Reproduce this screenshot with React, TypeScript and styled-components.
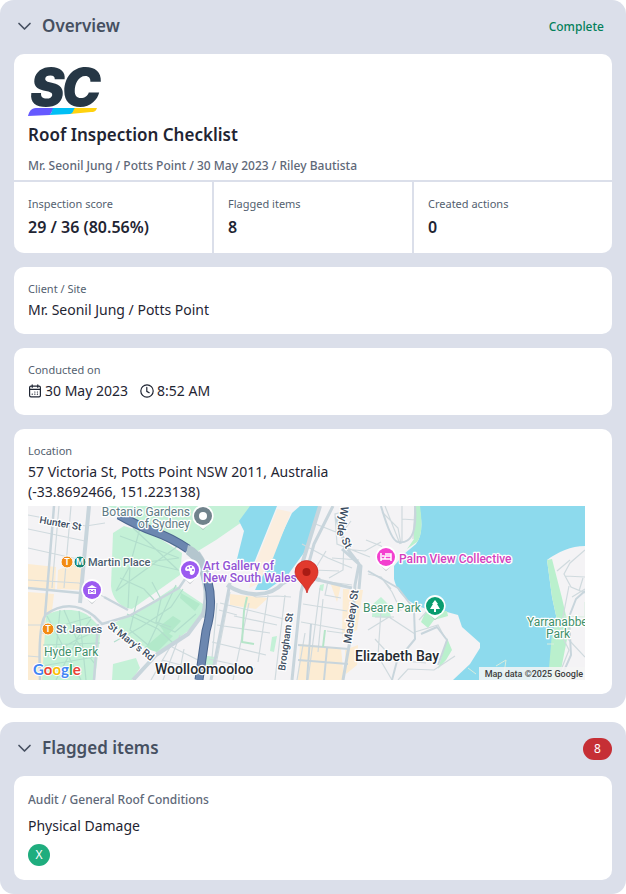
import React from "react";
import styled, { createGlobalStyle } from "styled-components";

const GlobalStyle = createGlobalStyle`
  *, *::before, *::after { box-sizing: border-box; }
  body {
    margin: 0;
    background: #ffffff;
    color: #1f2533;
    font-family: "Noto Sans", sans-serif;
    font-size: 14px;
    line-height: 20px;
  }
`;

const Page = styled.main`
  display: flex;
  flex-direction: column;
  gap: 14px;
`;

const Panel = styled.section`
  padding: 0 14px 14px;
  border-radius: 14px;
  background: #dbdfea;
`;

const PanelHeader = styled.header`
  display: flex;
  align-items: center;
  justify-content: space-between;
  height: 54px;
`;

const PanelTitle = styled.h2`
  margin: 0;
  font-size: 17px;
  font-weight: 600;
  line-height: 24px;
`;

const Toggle = styled.button`
  display: flex;
  align-items: center;
  gap: 10px;
  padding: 0 0 2px 3px;
  border: 0;
  background: none;
  color: #465061;
  font: inherit;
  cursor: pointer;
`;

const Status = styled.span`
  padding-right: 8px;
  color: #04805a;
  font-size: 12px;
  font-weight: 500;
`;

const CountBadge = styled.span`
  min-width: 29px;
  border-radius: 11px;
  background: #c62f35;
  color: #ffffff;
  font-size: 12px;
  line-height: 22px;
  text-align: center;
`;

const CardStack = styled.div`
  display: flex;
  flex-direction: column;
  gap: 14px;
`;

const Card = styled.article`
  overflow: hidden;
  border-radius: 10px;
  background: #ffffff;
`;

const CardBody = styled.div`
  padding: 14px;
`;

const Summary = styled.div`
  padding: 13px 14px 4px;
`;

const ReportTitle = styled.h1`
  margin: 6px 0 9px;
  font-size: 17px;
  font-weight: 600;
  line-height: 24px;
`;

const Breadcrumb = styled.p`
  margin: 0;
  color: #5e6878;
  font-size: 12px;
  font-weight: 500;
`;

const Stats = styled.dl`
  display: grid;
  grid-template-columns: repeat(3, 1fr);
  gap: 2px;
  margin: 0;
  padding-top: 2px;
  background: #dbdfea;
`;

const Stat = styled.div`
  padding: 14px;
  background: #ffffff;
`;

const StatLabel = styled.dt`
  color: #545f70;
  font-size: 11px;
  line-height: 16px;
`;

const StatValue = styled.dd`
  margin: 3px 0 0;
  font-size: 16px;
  font-weight: 600;
  line-height: 24px;
`;

const FieldLabel = styled.h3`
  margin: 0;
  color: #545f70;
  font-size: 11px;
  font-weight: 400;
  line-height: 16px;
`;

const FieldValue = styled.p`
  margin: 3px 0 0;
`;

const DateRow = styled.div`
  display: flex;
  gap: 12px;
  margin-top: 3px;
`;

const DatePart = styled.span`
  display: flex;
  align-items: center;
  gap: 3px;
`;

const MapDrawing = styled.svg`
  display: block;
  width: 100%;
  max-width: 557px;
  height: auto;
  margin-top: 4px;
  font-family: Roboto, sans-serif;
`;

const FlagPath = styled.p`
  margin: 0;
  color: #5e6878;
  font-size: 12px;
  font-weight: 500;
`;

const FlagName = styled.h3`
  margin: 6px 0 8px;
  font-size: 14px;
  font-weight: 400;
`;

const Answer = styled.span`
  display: block;
  width: 22px;
  border-radius: 50%;
  background: #1fad7e;
  color: #ffffff;
  font-size: 12px;
  line-height: 22px;
  text-align: center;
`;

const LogoDrawing = styled.svg`
  display: block;
  overflow: visible;
`;

const Icon = styled.svg`
  display: block;
  flex: none;
  fill: none;
  stroke: currentColor;
  stroke-width: 1.2;
  stroke-linecap: round;
  stroke-linejoin: round;
`;

const Chevron = () => (
  <Icon width="15" height="14" viewBox="0 0 15 14" aria-hidden="true">
    <path d="M2 4.5 7.5 10 13 4.5" strokeWidth="1.7" />
  </Icon>
);

const CalendarIcon = () => (
  <Icon width="14" height="14" viewBox="0 0 14 14" aria-hidden="true">
    <rect x="1.6" y="2.2" width="10.8" height="10.6" rx="1.4" />
    <path d="M1.6 5.3h10.8M4.2.9v2.4M9.8.9v2.4" />
    <path d="M6.8 8h.1M9.4 8h.1M4.2 10.2h.1M6.8 10.2h.1M9.4 10.2h.1" />
  </Icon>
);

const ClockIcon = () => (
  <Icon width="14" height="14" viewBox="0 0 14 14" aria-hidden="true">
    <circle cx="7" cy="7" r="6.2" />
    <path d="M6.8 3.4v4l2.4 1.3" />
  </Icon>
);

const Logo = () => (
  <LogoDrawing width="76" height="50" viewBox="0 0 76 50" role="img" aria-label="SC logo">
    <g fontFamily="Inter, sans-serif" fontSize="52" fontWeight="900" fontStyle="italic" fill="#263745" stroke="#ffffff" strokeWidth="2" paintOrder="stroke">
      <text x="2" y="39">S</text>
      <text x="34" y="39">C</text>
    </g>
    <path d="M0 49C1 45 3 41 8 41H26L22 48Z" fill="#6559ff" />
    <path d="M25 41H48C46 42 46 47 42 47L21 48C24 47 24 43 25 41Z" fill="#00bff5" />
    <path d="M47 41H69C68 43 68 45 63 45L42 47C46 46 45 42 47 41Z" fill="#ffd20f" />
  </LogoDrawing>
);

interface PinProps {
  x: number;
  y: number;
  color: string;
  children?: React.ReactNode;
}

const Pin = ({ x, y, color, children }: PinProps) => (
  <g transform={`translate(${x} ${y})`}>
    <path d="M-5 9 0 14 6 8Z" fill="#8d999e" opacity=".6" />
    <path d="M0-11A11 11 0 0 1 8 7L0 13-8 7A11 11 0 0 1 0-11Z" fill="#fff" />
    <circle r="9" fill={color} />
    {children}
  </g>
);

const LocationMap = () => (
  <MapDrawing viewBox="0 0 557 174" role="img" aria-label="Map of 57 Victoria St, Potts Point">
    <rect width="557" height="174" fill="#f4f3f5" />
    <path d="M0 58 28 61 27 84 0 82ZM0 86 26 88 16 174H0ZM30 64 58 52 54 84 29 83Z" fill="#fcecd3" />

    <g fill="#c4f1d7">
      <path d="M85 27 96 20 128 30 154 47 152 69 104 103C92 102 84 92 83 80Z" />
      <path d="M80 0H228L214 16 188 34 170 45 130 24 99 9Z" />
      <path d="M82 119 112 104 148 80 178 100 164 122 131 147 108 137Z" />
      <path d="M85 158 108 152 112 162 104 174H84Z" />
      <path d="M18 109C30 103 52 101 63 112L73 122 67 174H14Z" />
      <path d="M172 149 188 151 186 162 174 163ZM292 79 296 78 295 85 291 84Z" />
      <path d="M244 131 249 130 246 146 242 145ZM345 98 353 91 361 99 363 112 344 111Z" />
    </g>
    <path d="M116 142 136 125 145 130 129 146ZM132 120 145 110 153 115 139 130ZM153 87 172 98 167 105 152 92Z" fill="#b2e9ca" />

    <path d="M222 0H249L226 57 207 61 216 25 211 15Z" fill="#8ddaed" />
    <path d="M264 7 272 0H291L278 44 259 70 239 84 227 84Z" fill="#8ddaed" />
    <path d="M249 3 263 6 245 52 230 78 221 82 228 56Z" fill="#fbeedf" />
    <path d="M202 88 240 92 228 103 202 99ZM315 83 335 84 329 124 314 132ZM272 138 313 142 316 174H270ZM302 76 313 79 309 96ZM317 144 330 139 329 159 318 168Z" fill="#fcecd3" />

    <path d="M391 0H557V40C543 40 530 46 519 54L524 91 529 114 520 174H425L442 158 452 142V137L434 121 430 109 419 106 402 104C380 98 369 87 366 73L366 60 376 48 388 38C394 30 395 18 391 0Z" fill="#8ddaed" />
    <path d="M386 0H392Q396 28 389 36L379 43 386 33ZM519 54 524 53 534 92 541 123 531 174H520L524 127 529 114 524 91ZM398 105 419 105 420 110 406 114 400 122 393 116Z" fill="#baf0cd" />
    <path d="M419 132 424 144 418 154 410 163Z" fill="#baf0cd" />
    <path d="M535 110 557 111V96M468 160 478 154 476 168M519 138H526M440 162 448 168" fill="none" stroke="#d9edde" />

    <g fill="none" stroke="#d0dade" strokeWidth="1.2">
      <path d="M31 0 24 82M43 0 36 82M0 9 58 20 77 17M0 23 57 35M0 42 54 54M0 74 51 77 76 91" />
      <path d="M102 13 149 41M92 30 151 52 103 58 88 85 150 40M105 22 150 64 94 51M112 22 102 59 100 102M92 72 116 83 126 94" stroke="#b2decc" />
      <path d="M99 108 130 123 145 137M105 107 147 126 168 108M148 79 120 139 102 124 110 90M155 83 143 101 113 121 86 136M124 76 133 93 128 116 143 121" stroke="#b2decc" />
      <path d="M14 125 63 111M19 110 53 174M36 104 49 134 28 174M63 113 48 134 18 151M73 123 48 134 67 158M15 139 72 137M32 104 28 145M51 105 58 174M14 160 72 150" stroke="#b2decc" />
      <path d="M189 97 184 152M202 86 187 164M221 97 205 174M240 89 230 156M257 89 247 174M192 97 256 113M189 119 242 127M184 136 238 149M181 153 227 163M204 81 228 91 249 90 263 91M206 110 249 119M191 104 209 109" />
      <path d="M274 38 300 52 324 62M285 17 313 28 323 15M298 45 281 73M304 52 331 54M285 64 311 65M316 31 315 64 301 72M286 74 324 79M300 75 297 89 313 92M275 98 319 105M273 116 317 124M277 127 269 174M292 82 280 174M316 43 337 45 353 36M322 4 307 8 309 38 342 51M340 68 353 71 363 83M295 93 290 146M299 125 321 128" />
      <path d="M354 6 370 22 373 38M357 0 372 38M374 0 374 35M387 2 385 33M374 13 388 14M338 34 353 40 364 55M340 124 361 111 387 128M353 104 350 150 364 174M387 126 410 119 417 132M391 114 402 102M347 133 366 154 398 157M370 174 380 163 406 164 427 150M353 71 364 86 373 105M347 111 366 111" />
      <path d="M557 44 542 57 536 68 543 81 557 87M537 70 557 71M541 80 532 126 541 144 529 174M542 112 557 118M540 133 557 151M529 65 542 54M544 91 557 83M555 72 551 85" />
      <path d="M123 174 145 136M135 174 152 129M150 174 156 143M144 141 170 154M134 154 168 163M0 119 19 119M12 151 0 150M19 84 15 128" />
    </g>

    <g fill="none" stroke="#c8d5dc" strokeLinejoin="round">
      <path d="M61 0 52 97" strokeWidth="4" />
      <path d="M26 0 17 110Q10 120 12 174M0 82 52 87M17 109Q42 91 66 110L74 118 101 110 151 82 170 54M70 118 66 174M76 91 100 104" strokeWidth="2.5" />
      <path d="M177 105 160 128 128 149 105 174" strokeWidth="4" />
      <path d="M199 79C217 91 242 92 255 77Q271 67 292 74M292 0 275 55 273 73" strokeWidth="4" />
      <path d="M305 0 286 38 273 86 264 174M308 11 318 41 331 58 327 79 324 123 315 174M202 77 188 149 183 174M314 43 333 60 331 83M286 73 324 82" strokeWidth="3" />
      <path d="M270 139 321 143M270 154 320 158M283 118 279 174M299 142 296 174M353 0Q363 35 370 36C382 38 389 29 387 0M340 65 370 82 386 103 387 133 369 155 364 174M393 128 409 121 419 134 410 159M557 85 548 93 541 111 543 149 532 174" strokeWidth="2" />
      <path d="M219 91 216 105 214 136 226 138M297 124 295 141" stroke="#b6e5c9" strokeWidth="2" />
    </g>

    <g fill="none" strokeLinejoin="round">
      <path d="M168 48Q177 60 179 78Q182 90 177 112" stroke="#c2d0d8" strokeWidth="9" />
      <path d="M91 9Q110 20 127 26T160 43M180 76Q186 98 178 125L171 174" stroke="#4c678f" strokeWidth="9" />
      <path d="M91 9Q110 20 127 26T160 43M180 76Q186 98 178 125L171 174" stroke="#6c87b0" strokeWidth="7" />
    </g>
    <path d="M160 39Q175 42 185 76L174 76Q171 57 158 48Z" fill="#b4c6ce" />

    <g stroke="#ffffff" strokeWidth="2.5" strokeLinejoin="round" paintOrder="stroke">
      <g fill="#607b85" fontSize="12" textAnchor="end">
        <text x="162" y="10">Botanic Gardens</text>
        <text x="162" y="22">of Sydney</text>
      </g>
      <g fill="#4c5e70" fontSize="11" fontWeight="500">
        <text x="60" y="60">Martin Place</text>
        <text x="28" y="127">St James</text>
      </g>
      <g fill="#3c4d61" fontSize="10" fontWeight="500">
        <text transform="translate(11 17) rotate(10)">Hunter St</text>
        <text transform="translate(79 121) rotate(38)">St Mary’s Rd</text>
        <text transform="translate(257 165) rotate(-82)">Brougham St</text>
        <text transform="translate(323 138) rotate(-82)" fontSize="11">Macleay St</text>
        <text transform="translate(313 0) rotate(98)" fontSize="11">Wylde</text>
        <text transform="translate(313 34) rotate(62)" fontSize="11">St</text>
      </g>
      <g fill="#3f906b" fontSize="12">
        <text x="16" y="150">Hyde Park</text>
        <text x="335" y="106">Beare Park</text>
        <text x="499" y="120">Yarranabbe</text>
        <text x="518" y="132">Park</text>
      </g>
      <g fill="#9255d5" fontSize="12" fontWeight="500">
        <text x="175" y="64">Art Gallery of</text>
        <text x="175" y="76">New South Wales</text>
      </g>
      <text x="371" y="57" fill="#d33fc0" fontSize="12" fontWeight="500">Palm View Collective</text>
      <g fill="#252b31" fontSize="14" fontWeight="500">
        <text x="127" y="168">Woolloomooloo</text>
        <text x="327" y="155">Elizabeth Bay</text>
      </g>
    </g>

    <g stroke="#ffffff">
      <circle cx="39" cy="56" r="6" fill="#f28b13" />
      <circle cx="52" cy="56" r="6" fill="#188575" />
      <circle cx="20" cy="123" r="6" fill="#f28b13" />
    </g>
    <g fill="#ffffff" fontSize="9" fontWeight="700" textAnchor="middle">
      <text x="39" y="59">T</text>
      <text x="52" y="59">M</text>
      <text x="20" y="126">T</text>
    </g>

    <Pin x={175} y={10} color="#71838c"><circle r="4" fill="#fff" /></Pin>
    <Pin x={162} y={64} color="#9c5bf0">
      <path d="M-5-1Q-4-5 1-5Q5-4 5 0Q5 5 1 5Q-1 4 0 2Q-1 0-3 1Q-5 1-5-1Z" fill="#fff" />
      <g fill="#9c5bf0"><circle cx="-2" cy="-2" r="1" /><circle cx="1" cy="-3" r="1" /><circle cx="3" cy="0" r="1" /></g>
    </Pin>
    <Pin x={64} y={84} color="#9c5bf0">
      <path d="M-5-2 0-5 5-2ZM-4-1H4V4H-4Z" fill="#fff" />
      <path d="M-2 3V0L0 2 2 0V3" fill="none" stroke="#9c5bf0" />
    </Pin>
    <Pin x={358} y={51} color="#f340cf">
      <path d="M-5-4V4M-5 2H5V4M5 2V-1H-1V2M-1-3H5V0" fill="none" stroke="#fff" strokeWidth="1.5" />
      <circle cx="-3" cy="-1" r="1" fill="#fff" />
    </Pin>
    <Pin x={407} y={100} color="#0a9c70">
      <path d="M0-6 3-2H2L5 3H1V6H-1V3H-5L-2-2H-3Z" fill="#fff" />
    </Pin>

    <path d="M279 87C277 78 267 74 267 66A11.5 11.5 0 0 1 290 66C290 74 281 78 279 87Z" fill="#e13a2d" stroke="#c5221f" strokeWidth=".7" />
    <circle cx="278.5" cy="66" r="4" fill="#a91b14" />

    <text x="5" y="169" fontFamily="Lato, sans-serif" fontSize="15" fontWeight="700" stroke="#ffffff" strokeWidth="2" paintOrder="stroke">
      <tspan fill="#4285f4">G</tspan><tspan fill="#ea4335">o</tspan><tspan fill="#fbbc04">o</tspan><tspan fill="#4285f4">g</tspan><tspan fill="#34a853">l</tspan><tspan fill="#ea4335">e</tspan>
    </text>
    <path d="M451 161H557V174H451Z" fill="#f5f5f5" opacity=".85" />
    <text x="555" y="171" fill="#3d3d3d" fontSize="9" fontWeight="500" textAnchor="end">Map data ©2025 Google</text>
  </MapDrawing>
);

const stats = [
  { label: "Inspection score", value: "29 / 36 (80.56%)" },
  { label: "Flagged items", value: "8" },
  { label: "Created actions", value: "0" },
];

export default function App() {
  return (
    <>
      <GlobalStyle />
      <Page>
        <Panel>
          <PanelHeader>
            <Toggle type="button" aria-expanded="true">
              <Chevron />
              <PanelTitle as="span">Overview</PanelTitle>
            </Toggle>
            <Status>Complete</Status>
          </PanelHeader>
          <CardStack>
            <Card>
              <Summary>
                <Logo />
                <ReportTitle>Roof Inspection Checklist</ReportTitle>
                <Breadcrumb>Mr. Seonil Jung / Potts Point / 30 May 2023 / Riley Bautista</Breadcrumb>
              </Summary>
              <Stats>
                {stats.map((stat) => (
                  <Stat key={stat.label}>
                    <StatLabel>{stat.label}</StatLabel>
                    <StatValue>{stat.value}</StatValue>
                  </Stat>
                ))}
              </Stats>
            </Card>
            <Card>
              <CardBody>
                <FieldLabel>Client / Site</FieldLabel>
                <FieldValue>Mr. Seonil Jung / Potts Point</FieldValue>
              </CardBody>
            </Card>
            <Card>
              <CardBody>
                <FieldLabel>Conducted on</FieldLabel>
                <DateRow>
                  <DatePart><CalendarIcon />30 May 2023</DatePart>
                  <DatePart><ClockIcon />8:52 AM</DatePart>
                </DateRow>
              </CardBody>
            </Card>
            <Card>
              <CardBody>
                <FieldLabel>Location</FieldLabel>
                <FieldValue>
                  57 Victoria St, Potts Point NSW 2011, Australia
                  <br />
                  (-33.8692466, 151.223138)
                </FieldValue>
                <LocationMap />
              </CardBody>
            </Card>
          </CardStack>
        </Panel>
        <Panel>
          <PanelHeader>
            <Toggle type="button" aria-expanded="true">
              <Chevron />
              <PanelTitle as="span">Flagged items</PanelTitle>
            </Toggle>
            <CountBadge>8</CountBadge>
          </PanelHeader>
          <Card>
            <CardBody>
              <FlagPath>Audit / General Roof Conditions</FlagPath>
              <FlagName>Physical Damage</FlagName>
              <Answer>X</Answer>
            </CardBody>
          </Card>
        </Panel>
      </Page>
    </>
  );
}
